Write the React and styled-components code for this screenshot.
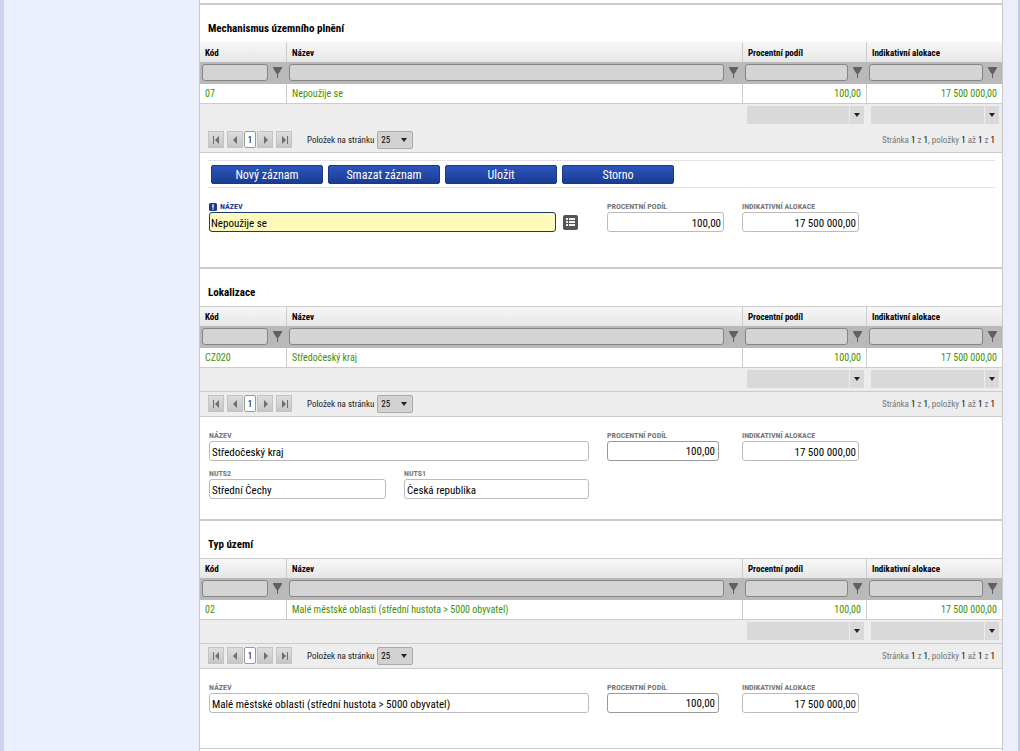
import React from 'react'
import styled, { createGlobalStyle } from 'styled-components'

const GlobalStyle = createGlobalStyle`
    * { box-sizing: border-box; }
    body {
        margin: 0;
        background: #ebeffc;
        font-family: 'Roboto Condensed', 'Liberation Sans Narrow', Roboto, sans-serif;
        font-size: 11px;
        color: #000;
    }
    input, button, select { font: inherit; color: inherit; margin: 0; }
`

const columns = [
    { key: 'kod', title: 'Kód', width: '87px' },
    { key: 'nazev', title: 'Název' },
    { key: 'podil', title: 'Procentní podíl', width: '124px', numeric: true },
    { key: 'alokace', title: 'Indikativní alokace', width: '135px', numeric: true },
]

function FilterIcon() {
    return (
        <svg width="9" height="11" viewBox="0 0 9 11" aria-hidden="true">
            <path d="M0 0H9V1L6 6L5 7V11H4V7L3 6L0 1Z" fill="#606060" />
        </svg>
    )
}

function Caret() {
    return (
        <svg width="6" height="4" viewBox="0 0 6 4" aria-hidden="true">
            <path d="M0 0H6L3 4Z" fill="#222" />
        </svg>
    )
}

function ListIcon() {
    return (
        <svg width="9" height="8" viewBox="0 0 9 8" aria-hidden="true">
            <path d="M0 0H2V2H0ZM3 0H9V2H3ZM0 3H2V5H0ZM3 3H9V5H3ZM0 6H2V8H0ZM3 6H9V8H3Z" fill="#f2f2f2" />
        </svg>
    )
}

function RequiredIcon() {
    return (
        <svg width="8" height="8" viewBox="0 0 8 8" aria-hidden="true">
            <rect width="8" height="8" rx="1.5" fill="#1d3a8a" />
            <path d="M3.3 1.2H4.7V4.8H3.3ZM3.3 5.5H4.7V6.8H3.3Z" fill="#fff" />
        </svg>
    )
}

const arrows = {
    first: 'M0 0H1V8H0ZM6 0V8L2 4Z',
    prev: 'M5 0V8L1 4Z',
    next: 'M2 0V8L6 4Z',
    last: 'M1 0V8L5 4ZM6 0H7V8H6Z',
}

function PageArrow({ type, label }) {
    return (
        <PageButton type="button" aria-label={label}>
            <svg width="7" height="8" viewBox="0 0 7 8" aria-hidden="true">
                <path d={arrows[type]} fill="#6e6e6e" />
            </svg>
        </PageButton>
    )
}

function Grid({ id, row, plain }) {
    return (
        <>
            <Table>
                <colgroup>
                    {columns.map((c) => <Col key={c.key} $width={c.width} />)}
                </colgroup>
                <thead>
                    <tr>
                        {columns.map((c) => <HeadCell key={c.key} scope="col" $plain={plain}>{c.title}</HeadCell>)}
                    </tr>
                    <tr>
                        {columns.map((c) => (
                            <FilterCell key={c.key}>
                                <FilterBox>
                                    <FilterInput aria-label={'Filtr ' + c.title} />
                                    <FilterButton type="button" aria-label={'Filtrovat ' + c.title}><FilterIcon /></FilterButton>
                                </FilterBox>
                            </FilterCell>
                        ))}
                    </tr>
                </thead>
                <tbody>
                    <tr>
                        {columns.map((c) => <Cell key={c.key} $numeric={c.numeric}>{row[c.key]}</Cell>)}
                    </tr>
                </tbody>
                <tfoot>
                    <tr>
                        {columns.map((c) => (
                            <FootCell key={c.key}>
                                {c.numeric && (
                                    <Combo>
                                        <ComboInput aria-label={'Souhrn ' + c.title} />
                                        <ComboButton type="button" aria-label="Otevřít"><Caret /></ComboButton>
                                    </Combo>
                                )}
                            </FootCell>
                        ))}
                    </tr>
                </tfoot>
            </Table>
            <Pager $plain={plain}>
                <Pages>
                    <PageArrow type="first" label="První" />
                    <PageGroup>
                        <PageArrow type="prev" label="Předchozí" />
                        <PageNumber type="button">1</PageNumber>
                        <PageArrow type="next" label="Další" />
                    </PageGroup>
                    <PageArrow type="last" label="Poslední" />
                </Pages>
                <SizeLabel htmlFor={id + '-size'}>Položek na stránku</SizeLabel>
                <SizeBox>
                    <SizeSelect id={id + '-size'} defaultValue="25">
                        <option>25</option>
                        <option>50</option>
                    </SizeSelect>
                    <Caret />
                </SizeBox>
                <PageInfo>Stránka <b>1</b> z <b>1</b>, položky <b>1</b> až <b>1</b> z <b>1</b></PageInfo>
            </Pager>
        </>
    )
}

function Field({ id, label, value, wide, numeric, editable, required }) {
    return (
        <FieldBox $wide={wide}>
            <Label htmlFor={id} $required={required}>{required && <RequiredIcon />}{label}</Label>
            <InputRow>
                <Input id={id} defaultValue={value} readOnly={!editable && !required} $numeric={numeric} $editable={editable} $required={required} />
                {required && <PickButton type="button" aria-label="Vybrat"><ListIcon /></PickButton>}
            </InputRow>
        </FieldBox>
    )
}

function App() {
    return (
        <>
            <GlobalStyle />
            <Page>
                <Side />
                <Main>
                    <Section>
                        <Title>Mechanismus územního plnění</Title>
                        <Grid id="mup" plain row={{ kod: '07', nazev: 'Nepoužije se', podil: '100,00', alokace: '17 500 000,00' }} />
                        <Toolbar>
                            <Button type="button">Nový záznam</Button>
                            <Button type="button">Smazat záznam</Button>
                            <Button type="button">Uložit</Button>
                            <Button type="button">Storno</Button>
                        </Toolbar>
                        <Form $bottom="35px">
                            <Field id="mup-nazev" label="NÁZEV" value="Nepoužije se" wide required />
                            <Field id="mup-podil" label="PROCENTNÍ PODÍL" value="100,00" numeric />
                            <Field id="mup-alokace" label="INDIKATIVNÍ ALOKACE" value="17 500 000,00" numeric />
                        </Form>
                    </Section>
                    <Section>
                        <Title>Lokalizace</Title>
                        <Grid id="lok" row={{ kod: 'CZ020', nazev: 'Středočeský kraj', podil: '100,00', alokace: '17 500 000,00' }} />
                        <Form $bottom="20px">
                            <Field id="lok-nazev" label="NÁZEV" value="Středočeský kraj" wide />
                            <Field id="lok-podil" label="PROCENTNÍ PODÍL" value="100,00" numeric editable />
                            <Field id="lok-alokace" label="INDIKATIVNÍ ALOKACE" value="17 500 000,00" numeric />
                            <Field id="lok-nuts2" label="NUTS2" value="Střední Čechy" />
                            <Field id="lok-nuts1" label="NUTS1" value="Česká republika" />
                        </Form>
                    </Section>
                    <Section>
                        <Title>Typ území</Title>
                        <Grid id="typ" row={{ kod: '02', nazev: 'Malé městské oblasti (střední hustota > 5000 obyvatel)', podil: '100,00', alokace: '17 500 000,00' }} />
                        <Form $bottom="35px">
                            <Field id="typ-nazev" label="NÁZEV" value="Malé městské oblasti (střední hustota > 5000 obyvatel)" wide />
                            <Field id="typ-podil" label="PROCENTNÍ PODÍL" value="100,00" numeric editable />
                            <Field id="typ-alokace" label="INDIKATIVNÍ ALOKACE" value="17 500 000,00" numeric />
                        </Form>
                    </Section>
                    <End />
                </Main>
            </Page>
        </>
    )
}

export default App

const Page = styled.div`
    display: flex;
    min-height: 100vh;
    border-left: 4px solid #cdd3ea;
    border-right: 2px solid #c3cae6;
    padding-right: 15px;
`
const Side = styled.aside`
    flex: 0 0 195px;
`
const Main = styled.main`
    flex: 1;
    min-width: 0;
    padding-top: 3px;
    background: #fff;
    border-left: 1px solid #c8c8cc;
    border-right: 1px solid #c8c8cc;
`
const Section = styled.section`
    border-top: 2px solid #ccc;
`
const End = styled.div`
    border-top: 1px solid #ccc;
`
const Title = styled.h2`
    margin: 0;
    padding: 17px 8px 6px;
    font-size: 11px;
    line-height: 14px;
    font-weight: 700;
`
const Table = styled.table`
    width: 100%;
    table-layout: fixed;
    border-collapse: separate;
    border-spacing: 0;
`
const Col = styled.col`
    width: ${(p) => p.$width || 'auto'};
`
const HeadCell = styled.th`
    height: 20px;
    padding: 0 5px;
    text-align: left;
    font-size: 9px;
    line-height: 12px;
    font-weight: 700;
    background: linear-gradient(#f7f7f7, #e6e6e6);
    border-top: 1px solid ${(p) => (p.$plain ? '#f7f7f7' : '#ccc')};
    border-right: 1px solid #ccc;

    &:last-child { border-right: 0; }
`
const FilterCell = styled.td`
    height: 22px;
    padding: 2px 5px 3px 2px;
    vertical-align: top;
    background: #b9b9b9;
`
const FilterBox = styled.div`
    display: flex;
    align-items: center;
    gap: 5px;
`
const FilterInput = styled.input`
    flex: 1;
    min-width: 0;
    height: 17px;
    padding: 0 3px;
    background: #d4d4d4;
    border: 1px solid #858585;
    border-radius: 3px;
`
const FilterButton = styled.button`
    display: flex;
    padding: 0;
    background: none;
    border: 0;
`
const Cell = styled.td`
    height: 20px;
    padding: 1px 5px 0;
    font-size: 10px;
    line-height: 14px;
    color: #3f9000;
    text-align: ${(p) => (p.$numeric ? 'right' : 'left')};
    border-right: 1px solid #ccc;
    border-bottom: 1px solid #ccc;

    &:last-child { border-right: 0; }
`
const FootCell = styled.td`
    height: 23px;
    padding: 2px 3px 3px 4px;
    vertical-align: top;
    background: #ededed;
`
const Combo = styled.div`
    display: flex;
    gap: 1px;
    height: 18px;
`
const ComboInput = styled.input`
    flex: 1;
    min-width: 0;
    padding: 0 3px;
    background: #d9d9d9;
    border: 0;
`
const ComboButton = styled.button`
    display: flex;
    align-items: center;
    justify-content: center;
    width: 14px;
    padding: 0;
    background: #d9d9d9;
    border: 0;
`
const Pager = styled.div`
    display: flex;
    align-items: center;
    height: 26px;
    padding: 0 7px 1px 8px;
    font-size: 9px;
    background: #ededed;
    border-top: 1px solid ${(p) => (p.$plain ? '#ededed' : '#ccc')};
    border-bottom: 1px solid #ccc;
`
const Pages = styled.div`
    display: flex;
    gap: 3px;
`
const PageGroup = styled.div`
    display: flex;
    gap: 1px;
`
const PageButton = styled.button`
    display: flex;
    align-items: center;
    justify-content: center;
    width: 16px;
    height: 17px;
    padding: 0;
    background: linear-gradient(#dedede, #c6c6c6);
    border: 1px solid #c4c4c4;
`
const PageNumber = styled.button`
    width: 12px;
    height: 17px;
    padding: 0;
    background: #fff;
    border: 1px solid #999;
    border-radius: 2px;
`
const SizeLabel = styled.label`
    padding: 0 3px 0 15px;
    color: #222;
`
const SizeBox = styled.div`
    position: relative;

    svg {
        position: absolute;
        top: 7px;
        right: 6px;
        pointer-events: none;
    }
`
const SizeSelect = styled.select`
    appearance: none;
    display: block;
    width: 36px;
    height: 18px;
    padding: 0 3px;
    background: #d2d2d2;
    border: 1px solid #aaa;
    border-radius: 2px;
`
const PageInfo = styled.span`
    margin-left: auto;
    color: #777;

    b {
        font-weight: 400;
        color: #000;
    }
`
const Toolbar = styled.div`
    display: flex;
    gap: 5px;
    margin: 7px 7px 0 8px;
    padding: 4px 3px 3px;
    border-top: 1px solid #e2e2e2;
    border-bottom: 1px solid #e2e2e2;
`
const Button = styled.button`
    width: 112px;
    height: 19px;
    padding: 0;
    font-size: 12px;
    line-height: 16px;
    color: #fff;
    background: linear-gradient(#2c55bd, #1b3c92);
    border: 1px solid #1b3880;
    border-radius: 2px;
`
const Form = styled.div`
    display: grid;
    grid-template-columns: 177px 185px 117px 117px;
    gap: 8px 18px;
    padding: 14px 9px ${(p) => p.$bottom};
`
const FieldBox = styled.div`
    grid-column: span ${(p) => (p.$wide ? 2 : 1)};
`
const Label = styled.label`
    display: flex;
    align-items: center;
    gap: 3px;
    height: 10px;
    font-size: 8px;
    line-height: 10px;
    font-weight: 700;
    color: ${(p) => (p.$required ? '#1d3a8a' : '#777')};
`
const InputRow = styled.div`
    display: flex;
    align-items: center;
    gap: 7px;
`
const Input = styled.input`
    width: ${(p) => (p.$required ? '347px' : p.$editable ? '112px' : '100%')};
    height: 20px;
    padding: ${(p) => (p.$editable ? '0 3px' : p.$required ? '2px 1px 0' : '2px 2px 0')};
    text-align: ${(p) => (p.$numeric ? 'right' : 'left')};
    background: ${(p) => (p.$required ? '#fdfabc' : '#fff')};
    border: 1px solid ${(p) => (p.$required ? '#1d3a6a' : p.$editable ? '#999' : '#bbb')};
    border-radius: 3px;
`
const PickButton = styled.button`
    display: flex;
    align-items: center;
    justify-content: center;
    width: 15px;
    height: 15px;
    padding: 0;
    background: #555;
    border: 0;
    border-radius: 2px;
`
